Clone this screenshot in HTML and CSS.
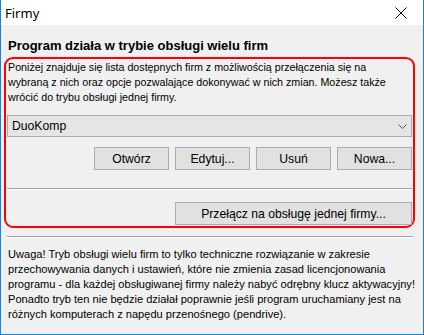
FILE: index.html
```html
<!DOCTYPE html>
<html lang="pl">
<head>
  <meta charset="UTF-8">
  <title>Firmy</title>
  <link rel="stylesheet" href="styles.css">
</head>
<body>
  <div class="window">
    <div class="titlebar">
      <span class="title">Firmy</span>
      <span class="close-btn">
        <svg width="12" height="12" viewBox="0 0 12 12"><path d="M0.5 0.5 L11.5 11.5 M11.5 0.5 L0.5 11.5" stroke="#000" stroke-width="1" fill="none"/></svg>
      </span>
    </div>
    <div class="content">
      <h1>Program działa w trybie obsługi wielu firm</h1>
      <div class="group">
        <p class="intro">Poniżej znajduje się lista dostępnych firm z możliwością przełączenia się na wybraną z nich oraz opcje pozwalające dokonywać w nich zmian. Możesz także wrócić do trybu obsługi jednej firmy.</p>
        <div class="select">
          <span>DuoKomp</span>
          <svg width="9" height="5" viewBox="0 0 9 5"><path d="M0.5 0.5 L4.5 4.5 L8.5 0.5" stroke="#555" stroke-width="1" fill="none"/></svg>
        </div>
        <div class="button-row">
          <button class="btn">Otwórz</button>
          <button class="btn">Edytuj...</button>
          <button class="btn">Usuń</button>
          <button class="btn">Nowa...</button>
        </div>
        <div class="separator"></div>
        <div class="button-row">
          <button class="btn btn-wide">Przełącz na obsługę jednej firmy...</button>
        </div>
      </div>
      <div class="separator outer"></div>
      <p class="warning">Uwaga! Tryb obsługi wielu firm to tylko techniczne rozwiązanie w zakresie przechowywania danych i ustawień, które nie zmienia zasad licencjonowania programu - dla każdej obsługiwanej firmy należy nabyć odrębny klucz aktywacyjny! Ponadto tryb ten nie będzie działał poprawnie jeśli program uruchamiany jest na różnych komputerach z napędu przenośnego (pendrive).</p>
    </div>
  </div>
</body>
</html>
```

FILE: styles.css
```css
body {
  margin: 0;
  padding: 0;
  font-family: "Liberation Sans", Arial, sans-serif;
  font-size: 11.1px;
  color: #000;
}
.window {
  width: 424px;
  height: 335px;
  box-sizing: border-box;
  border: 1px solid #1883d7;
  border-top: none;
  background-color: #f0f0f0;
  display: flex;
  flex-direction: column;
}
.titlebar {
  height: 25px;
  background-color: #fff;
  display: flex;
  align-items: center;
  justify-content: space-between;
  padding-left: 4px;
}
.title {
  font-family: "Noto Sans", sans-serif;
  font-size: 13px;
}
.close-btn {
  width: 45px;
  height: 25px;
  display: flex;
  align-items: center;
  justify-content: center;
}
.content {
  padding: 0 1px 0 3px;
}
h1 {
  margin: 14px 0 4px 4px;
  font-size: 13px;
  line-height: 14px;
  font-weight: bold;
}
.group {
  border: 2px solid #ff0000;
  border-radius: 9px;
  padding: 1px;
  margin-right: 7px;
}
.intro {
  margin: 0 0 10px 1px;
  max-width: 390px;
  line-height: 15px;
  font-size: 10.7px;
}
.select {
  height: 22px;
  box-sizing: border-box;
  border: 1px solid #acacac;
  background-color: #e5e5e5;
  display: flex;
  align-items: center;
  justify-content: space-between;
  padding: 0 4px 0 4px;
  font-size: 12.2px;
}
.button-row {
  display: flex;
  justify-content: flex-end;
  gap: 6px;
  margin-top: 10px;
}
.btn {
  width: 75px;
  height: 23px;
  box-sizing: border-box;
  border: 1px solid #adadad;
  background-color: #e1e1e1;
  font-family: "Liberation Sans", Arial, sans-serif;
  font-size: 12.2px;
  color: #000;
  padding: 0;
}
.btn-wide {
  width: 237px;
}
.separator {
  height: 1px;
  background-color: #a0a0a0;
  border-bottom: 1px solid #fff;
  margin-top: 18px;
}
.separator + .button-row {
  margin-top: 12px;
}
.separator.outer {
  margin: 8px 0 0 3px;
  width: 406px;
}
.warning {
  margin: 9px 0 0 4px;
  line-height: 15px;
}
```
